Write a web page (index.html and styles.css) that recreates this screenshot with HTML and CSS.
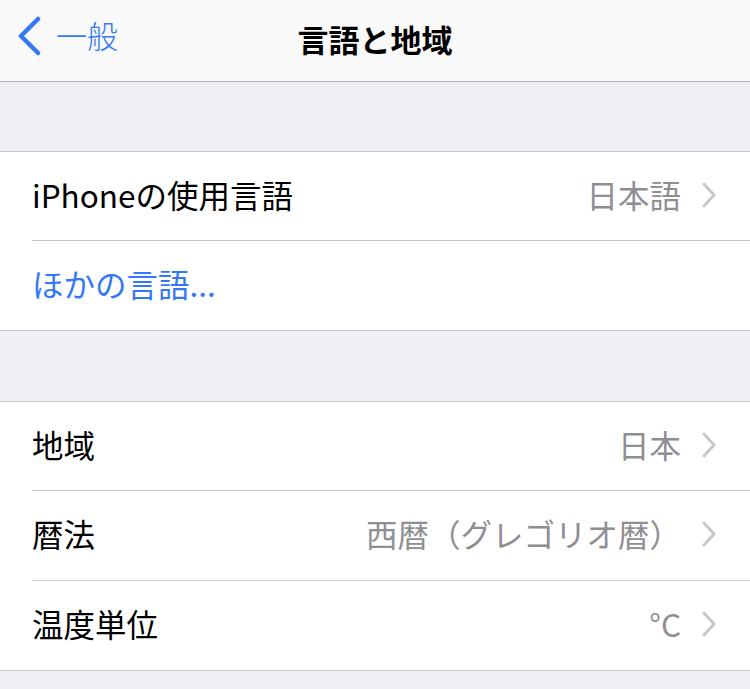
FILE: index.html
```html
<!DOCTYPE html>
<html lang="ja">
<head>
    <meta charset="UTF-8">
    <meta name="viewport" content="width=device-width, initial-scale=1.0">
    <title>言語と地域</title>
    <link rel="stylesheet" href="styles.css">
</head>
<body>
    <header class="navbar">
        <a class="back" href="#">
            <svg class="back-icon" width="26" height="40" viewBox="0 0 26 40">
                <path d="M22 3 L5 20 L22 37" fill="none" stroke="#3478f6" stroke-width="4.5" stroke-linecap="round" stroke-linejoin="round"/>
            </svg>
            <span>一般</span>
        </a>
        <h1>言語と地域</h1>
    </header>

    <div class="gap"></div>

    <ul class="group">
        <li class="row">
            <span class="label">iPhoneの使用言語</span>
            <span class="value">日本語</span>
            <svg class="chevron" width="14" height="26" viewBox="0 0 14 26"><path d="M2 2 L12 13 L2 24" fill="none" stroke="#c7c7cc" stroke-width="3" stroke-linecap="round" stroke-linejoin="round"/></svg>
        </li>
        <li class="row">
            <span class="label link">ほかの言語...</span>
        </li>
    </ul>

    <div class="gap wide"></div>

    <ul class="group">
        <li class="row">
            <span class="label">地域</span>
            <span class="value">日本</span>
            <svg class="chevron" width="14" height="26" viewBox="0 0 14 26"><path d="M2 2 L12 13 L2 24" fill="none" stroke="#c7c7cc" stroke-width="3" stroke-linecap="round" stroke-linejoin="round"/></svg>
        </li>
        <li class="row">
            <span class="label">暦法</span>
            <span class="value">西暦（グレゴリオ暦）</span>
            <svg class="chevron" width="14" height="26" viewBox="0 0 14 26"><path d="M2 2 L12 13 L2 24" fill="none" stroke="#c7c7cc" stroke-width="3" stroke-linecap="round" stroke-linejoin="round"/></svg>
        </li>
        <li class="row">
            <span class="label">温度単位</span>
            <span class="value">°C</span>
            <svg class="chevron" width="14" height="26" viewBox="0 0 14 26"><path d="M2 2 L12 13 L2 24" fill="none" stroke="#c7c7cc" stroke-width="3" stroke-linecap="round" stroke-linejoin="round"/></svg>
        </li>
    </ul>

    <div class="gap"></div>
</body>
</html>
```

FILE: styles.css
```css
body {
    margin: 0;
    padding: 0;
    background-color: #efeff4;
    font-family: "Noto Sans CJK JP", "Noto Sans", sans-serif;
    color: #000;
    overflow: hidden;
}
.navbar {
    position: relative;
    display: flex;
    align-items: center;
    justify-content: center;
    height: 81px;
    background-color: #f9f9f9;
    border-bottom: 1px solid #b2b2b2;
}
.navbar h1 {
    margin: 0;
    font-size: 31px;
    font-weight: 700;
    line-height: 1;
    margin-top: -5px;
}
.back {
    position: absolute;
    left: 16px;
    top: 16px;
    display: flex;
    align-items: center;
    gap: 14px;
    color: #3478f6;
    text-decoration: none;
    font-size: 31px;
    font-weight: 300;
    line-height: 1;
}
.back span {
    margin-top: -4px;
}
.gap {
    height: 69px;
}
.gap.wide {
    height: 70px;
}
.group {
    list-style: none;
    margin: 0;
    padding: 0 0 0 32px;
    background-color: #fff;
    border-top: 1px solid #c8c7cc;
    border-bottom: 1px solid #c8c7cc;
}
.row {
    display: flex;
    align-items: center;
    height: 89px;
    padding-right: 34px;
    border-bottom: 1px solid #c8c7cc;
}
.row:first-child {
    height: 88px;
}
.row:last-child {
    border-bottom: none;
}
.label {
    flex: 1;
    font-size: 31.5px;
    line-height: 1;
    margin-top: -3px;
}
.link {
    color: #3478f6;
}
.value {
    font-size: 31.5px;
    line-height: 1;
    color: #8e8e93;
    margin-top: -3px;
}
.chevron {
    margin-left: 21px;
    margin-top: -3px;
}
```
